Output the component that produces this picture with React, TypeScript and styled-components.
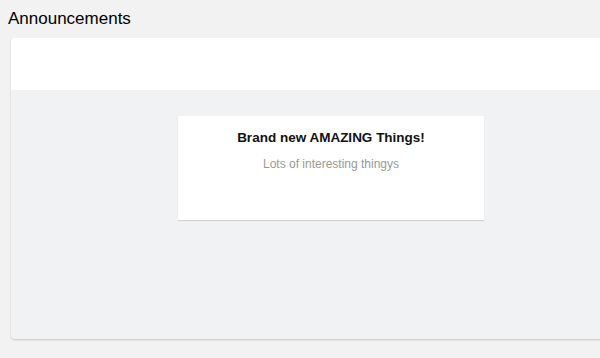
import React from "react";
import styled, { createGlobalStyle } from "styled-components";

const GlobalStyle = createGlobalStyle`
  html, body {
    margin: 0;
    background: #f2f2f2;
    font-family: "Liberation Sans", Arial, sans-serif;
    overflow: hidden;
  }
  body {
    padding: 8px;
  }
`;

export default function App() {
  return (
    <>
      <GlobalStyle />
      <Page>
        <Heading>Announcements</Heading>
        <Panel>
          <PanelHeader />
          <PanelBody>
            <Card>
              <CardTitle>Brand new AMAZING Things!</CardTitle>
              <CardText>Lots of interesting thingys</CardText>
            </Card>
          </PanelBody>
        </Panel>
      </Page>
    </>
  );
}

const Page = styled.div`
  display: flex;
  flex-direction: column;
  width: 660px;
`;

const Heading = styled.h1`
  margin: 1px 0 0;
  font-size: 17px;
  font-weight: 400;
  line-height: 19px;
  color: #000;
`;

const Panel = styled.section`
  margin: 10px 0 0 3px;
  width: 640px;
  border-radius: 4px;
  overflow: hidden;
  background: #f1f2f3;
  box-shadow: 0 1px 2px rgba(0, 0, 0, 0.18);
`;

const PanelHeader = styled.div`
  height: 52px;
  background: #fff;
`;

const PanelBody = styled.div`
  height: 249px;
  padding-top: 26px;
  box-sizing: border-box;
  display: flex;
  justify-content: center;
  align-items: flex-start;
`;

const Card = styled.div`
  width: 306px;
  height: 104px;
  background: #fff;
  box-shadow: 0 1px 1px rgba(0, 0, 0, 0.12);
  display: flex;
  flex-direction: column;
  align-items: center;
  padding-top: 14px;
  box-sizing: border-box;
`;

const CardTitle = styled.h2`
  margin: 0;
  font-size: 13.5px;
  font-weight: 700;
  line-height: 16px;
  color: #111;
`;

const CardText = styled.p`
  margin: 11px 0 0;
  font-size: 12px;
  line-height: 15px;
  color: #999;
`;
